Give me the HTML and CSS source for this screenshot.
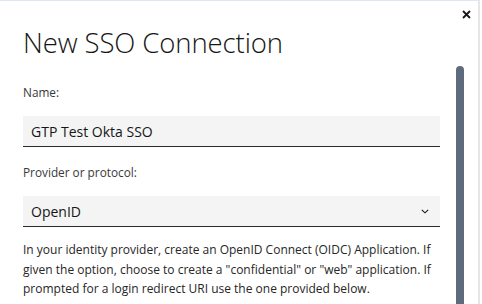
FILE: index.html
```html
<!DOCTYPE html>
<html>
<head>
<meta charset="utf-8">
<link rel="stylesheet" href="styles.css">
</head>
<body>
<div class="modal">
  <button class="close" aria-label="Close">
    <svg width="9" height="9" viewBox="0 0 9 9"><path d="M1 1L8 8M8 1L1 8" stroke="#161616" stroke-width="1.8"/></svg>
  </button>
  <div class="content">
    <h1 class="title">New SSO Connection</h1>
    <div class="field">
      <label class="label">Name:</label>
      <div class="input">GTP Test Okta SSO</div>
    </div>
    <div class="field">
      <label class="label">Provider or protocol:</label>
      <div class="input select">
        <span>OpenID</span>
        <svg width="8" height="5" viewBox="0 0 8 5"><path d="M0.8 0.8L4 3.8L7.2 0.8" fill="none" stroke="#161616" stroke-width="1.1"/></svg>
      </div>
    </div>
    <p class="help">In your identity provider, create an OpenID Connect (OIDC) Application. If given the option, choose to create a "confidential" or "web" application. If prompted for a login redirect URI use the one provided below.</p>
  </div>
  <div class="scroll-thumb"></div>
</div>
</body>
</html>
```
FILE: styles.css
```css
html, body {
  margin: 0;
  padding: 0;
  background: #ffffff;
}
body {
  font-family: "Open Sans", "Noto Sans", sans-serif;
  color: #161616;
}
.modal {
  position: relative;
  width: 480px;
  height: 304px;
  border-top: 1px solid #dfe6f5;
  border-right: 2px solid #e6e6e6;
  box-sizing: border-box;
  overflow: hidden;
  background: #fff;
}
.close {
  position: absolute;
  top: 5px;
  right: 4px;
  width: 16px;
  height: 16px;
  border: 0;
  padding: 0;
  background: transparent;
  display: flex;
  align-items: center;
  justify-content: center;
}
.content {
  padding: 24px 38px 0 23px;
}
.title {
  margin: 0;
  font-weight: 300;
  font-size: 27.5px;
  line-height: 36px;
  letter-spacing: -0.1px;
}
.field {
  display: flex;
  flex-direction: column;
  margin-top: 24px;
}
.field + .field {
  margin-top: 18px;
}
.label {
  font-size: 11.8px;
  line-height: 14px;
  color: #393939;
  margin-bottom: 17px;
}
.input {
  height: 30px;
  background: #f4f4f4;
  border-bottom: 1px solid #2b2b2b;
  display: flex;
  align-items: center;
  padding: 0 8px;
  font-size: 14px;
  color: #161616;
}
.select {
  justify-content: space-between;
  padding-right: 11px;
}
.help {
  margin: 13px 0 0;
  font-size: 12px;
  line-height: 19.5px;
  color: #262626;
}
.scroll-thumb {
  position: absolute;
  left: 456px;
  top: 65px;
  width: 8px;
  height: 260px;
  border-radius: 4px;
  background: #5d6b7d;
}
```
